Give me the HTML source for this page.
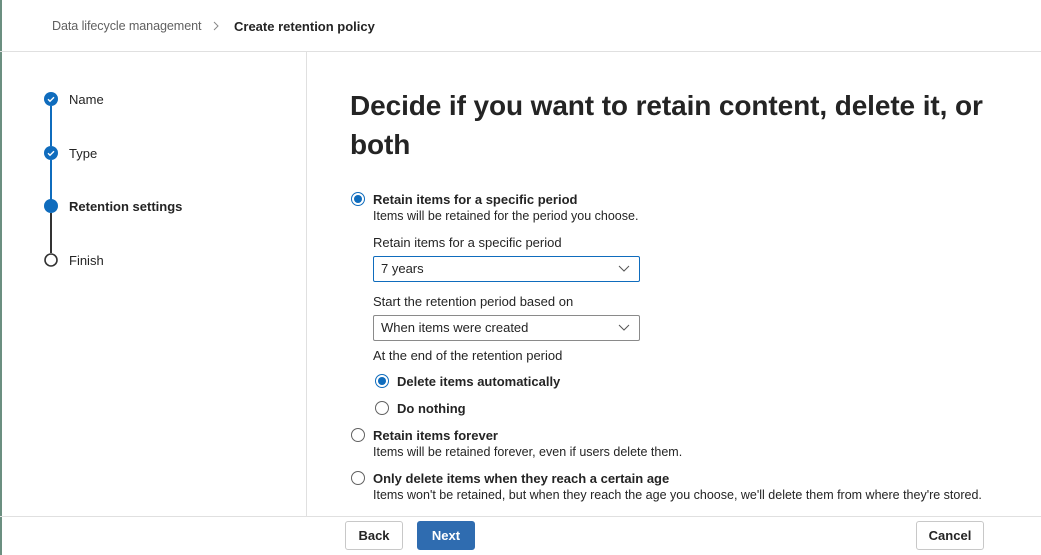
<!DOCTYPE html>
<html><head><style>
body{margin:0;width:1041px;height:555px;overflow:hidden;background:#fff;font-family:"Liberation Sans",sans-serif;color:#242424;position:relative}
.a{position:absolute;white-space:nowrap}
.t13{font-size:13px}
.b{font-weight:bold}
.rad{position:absolute;width:14px;height:14px;border:1px solid #616161;border-radius:50%;box-sizing:border-box}
.rad.on{border-color:#0f6cbd}
.rad.on:after{content:"";position:absolute;left:2px;top:2px;width:8px;height:8px;border-radius:50%;background:#0f6cbd}
.dd{position:absolute;left:373px;width:267px;height:26px;border:1px solid #8a8a8a;box-sizing:border-box;border-radius:2px;font-size:13px;line-height:24px;padding-left:7px}
.dd svg{position:absolute;right:9px;top:8px}
.btn{position:absolute;top:521px;height:29px;border:1px solid #c8c8c8;border-radius:3px;box-sizing:border-box;font-size:13px;font-weight:bold;line-height:27px;text-align:center;background:#fff}
</style></head><body>
<div class="a" style="left:0;top:0;width:2px;height:555px;background:#6b8f80"></div>
<div class="a t13" style="left:52px;top:19px;color:#616161;font-size:12.6px;letter-spacing:-0.1px">Data lifecycle management</div>
<svg class="a" style="left:213px;top:21px" width="6" height="10"><path d="M1 1l4 4-4 4" stroke="#888" fill="none"/></svg>
<div class="a t13 b" style="left:234px;top:19px">Create retention policy</div>
<div class="a" style="left:0;top:51px;width:1041px;height:1px;background:#e0e0e0"></div>
<div class="a" style="left:306px;top:52px;width:1px;height:464px;background:#e0e0e0"></div>
<div class="a" style="left:0;top:516px;width:1041px;height:1px;background:#e0e0e0"></div>

<div class="a" style="left:50px;top:106px;width:2px;height:40px;background:#0f6cbd"></div>
<div class="a" style="left:50px;top:160px;width:2px;height:40px;background:#0f6cbd"></div>
<div class="a" style="left:50px;top:213px;width:2px;height:40px;background:#333"></div>
<svg class="a" style="left:44px;top:92px" width="14" height="14"><circle cx="7" cy="7" r="7" fill="#0f6cbd"/><path d="M4 7.2l2 2 4-4" stroke="#fff" stroke-width="1.4" fill="none"/></svg>
<svg class="a" style="left:44px;top:146px" width="14" height="14"><circle cx="7" cy="7" r="7" fill="#0f6cbd"/><path d="M4 7.2l2 2 4-4" stroke="#fff" stroke-width="1.4" fill="none"/></svg>
<svg class="a" style="left:44px;top:199px" width="14" height="14"><circle cx="7" cy="7" r="7" fill="#0f6cbd"/></svg>
<svg class="a" style="left:44px;top:253px" width="14" height="14"><circle cx="7" cy="7" r="6" fill="#fff" stroke="#333" stroke-width="1.6"/></svg>
<div class="a t13" style="left:69px;top:92px">Name</div>
<div class="a t13" style="left:69px;top:146px">Type</div>
<div class="a t13 b" style="left:69px;top:199px">Retention settings</div>
<div class="a t13" style="left:69px;top:253px">Finish</div>

<div class="a" style="left:350px;top:86px;font-size:28px;font-weight:600;line-height:39px;letter-spacing:-0.1px">Decide if you want to retain content, delete it, or<br>both</div>

<div class="rad on" style="left:351px;top:192px"></div>
<div class="a t13 b" style="left:373px;top:192px">Retain items for a specific period</div>
<div class="a t13" style="left:373px;top:209px;font-size:12.5px">Items will be retained for the period you choose.</div>
<div class="a t13" style="left:373px;top:235px">Retain items for a specific period</div>
<div class="dd" style="top:256px;border-color:#0f6cbd">7 years<svg width="12" height="8"><path d="M1 1l5 5 5-5" stroke="#555" fill="none"/></svg></div>
<div class="a t13" style="left:373px;top:294px">Start the retention period based on</div>
<div class="dd" style="top:315px">When items were created<svg width="12" height="8"><path d="M1 1l5 5 5-5" stroke="#555" fill="none"/></svg></div>
<div class="a t13" style="left:373px;top:348px">At the end of the retention period</div>
<div class="rad on" style="left:375px;top:374px"></div>
<div class="a t13 b" style="left:397px;top:374px">Delete items automatically</div>
<div class="rad" style="left:375px;top:401px"></div>
<div class="a t13 b" style="left:397px;top:401px">Do nothing</div>

<div class="rad" style="left:351px;top:428px"></div>
<div class="a t13 b" style="left:373px;top:428px">Retain items forever</div>
<div class="a" style="left:373px;top:445px;font-size:12.5px">Items will be retained forever, even if users delete them.</div>
<div class="rad" style="left:351px;top:471px"></div>
<div class="a t13 b" style="left:373px;top:471px">Only delete items when they reach a certain age</div>
<div class="a" style="left:373px;top:488px;font-size:12.5px">Items won't be retained, but when they reach the age you choose, we'll delete them from where they're stored.</div>

<div class="btn" style="left:345px;width:58px">Back</div>
<div class="btn" style="left:417px;width:58px;background:#2f6cb0;border-color:#2f6cb0;color:#fff">Next</div>
<div class="btn" style="left:916px;width:68px">Cancel</div>
</body></html>
